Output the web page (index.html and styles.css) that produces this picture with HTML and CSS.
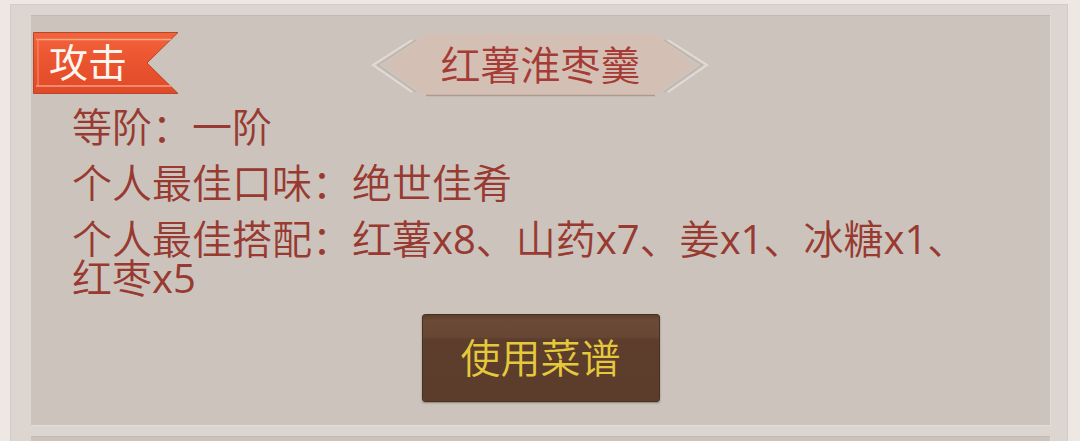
FILE: index.html
```html
<!DOCTYPE html>
<html lang="zh">
<head>
<meta charset="utf-8">
<link rel="stylesheet" href="styles.css">
</head>
<body>
<div class="frame">
  <div class="item">
    <div class="ribbon">
      <svg class="ribbon-bg" width="146" height="62" viewBox="0 0 146 62">
        <defs>
          <linearGradient id="rg" x1="0" y1="0" x2="0" y2="1">
            <stop offset="0" stop-color="#f2643c"/>
            <stop offset="0.5" stop-color="#ea532f"/>
            <stop offset="1" stop-color="#e04a28"/>
          </linearGradient>
        </defs>
        <polygon points="0.5,0.5 145,0.5 114,31 145,61.5 0.5,61.5" fill="url(#rg)" stroke="#b8462a" stroke-width="1"/>
        <line x1="3" y1="7.5" x2="138" y2="7.5" stroke="#f9a98a" stroke-width="1.5"/>
        <line x1="3" y1="54" x2="138" y2="54" stroke="#f7a080" stroke-width="1.5"/>
        <line x1="5" y1="7" x2="5" y2="54" stroke="#f58a68" stroke-width="1.2"/>
      </svg>
      <span class="ribbon-text">攻击</span>
    </div>
    <div class="banner-row">
      <div class="banner">
        <svg class="banner-bg" width="340" height="66" viewBox="0 0 340 66">
          <polyline points="42,8 3,33 42,60" fill="none" stroke="#e2dad4" stroke-width="2"/>
          <polyline points="46,8 8,33 46,60" fill="none" stroke="#b9aea6" stroke-width="1"/>
          <polyline points="298,8 337,33 298,60" fill="none" stroke="#e2dad4" stroke-width="2"/>
          <polyline points="294,8 332,33 294,60" fill="none" stroke="#b9aea6" stroke-width="1"/>
          <polygon points="15,33 56,2 285,2 324,33 285,64 56,64" fill="#d4bfb5"/>
          <line x1="56" y1="63.5" x2="285" y2="63.5" stroke="#ab9a91" stroke-width="1.5"/>
        </svg>
        <span class="banner-text">红薯淮枣羹</span>
      </div>
    </div>
    <div class="info">
      <p class="line">等阶：一阶</p>
      <p class="line">个人最佳口味：绝世佳肴</p>
      <p class="line">个人最佳搭配：红薯<span class="lat">x8</span>、山药<span class="lat">x7</span>、姜<span class="lat">x1</span>、冰糖<span class="lat">x1</span>、红枣<span class="lat">x5</span></p>
    </div>
    <div class="actions">
      <button class="use-btn">使用菜谱</button>
    </div>
  </div>
  <div class="item item-next"></div>
</div>
</body>
</html>
```

FILE: styles.css
```css
html, body {
  margin: 0;
  padding: 0;
}
body {
  width: 1080px;
  height: 441px;
  overflow: hidden;
  background: #ede8e4;
  font-family: "Open Sans", "Noto Sans CJK SC", "Noto Sans", sans-serif;
}
.frame {
  margin: 4px 12px 0 10px;
  padding: 10px 17px 0 20px;
  background: #ddd6d0;
  border: 1px solid #d3ccc6;
  border-bottom: none;
  height: 437px;
  box-sizing: border-box;
  overflow: hidden;
}
.item {
  position: relative;
  height: 410px;
  background: #ccc4bc;
  border-top: 1px solid #c2bab2;
  box-sizing: border-box;
  margin-bottom: 11px;
  box-shadow: 1px 1px 0 #e4ddd7;
}
.item-next {
  height: 60px;
}
.ribbon {
  position: absolute;
  left: 2px;
  top: 16px;
  width: 146px;
  height: 62px;
}
.ribbon-bg {
  position: absolute;
  left: 0;
  top: 0;
}
.ribbon-text {
  position: relative;
  display: block;
  padding-left: 16px;
  font-size: 39px;
  font-weight: 400;
  line-height: 60px;
  color: #fff6ef;
}
.banner-row {
  display: flex;
  justify-content: center;
  padding-top: 16px;
  padding-right: 2px;
}
.banner {
  position: relative;
  width: 340px;
  height: 66px;
  display: flex;
  align-items: center;
  justify-content: center;
}
.banner-bg {
  position: absolute;
  left: 0;
  top: 0;
}
.banner-text {
  position: relative;
  font-size: 40px;
  font-weight: 350;
  line-height: 66px;
  color: #a53b34;
  padding-left: 2px;
}
.info {
  padding: 9px 50px 0 41px;
}
.line {
  margin: 0 0 17px;
  font-size: 40px;
  font-weight: 350;
  line-height: 39px;
  color: #983a31;
}
.lat {
  font-weight: 400;
}
.actions {
  display: flex;
  justify-content: center;
  padding-top: 0;
}
.use-btn {
  width: 238px;
  height: 88px;
  border: 1px solid #4a3022;
  border-radius: 3px;
  background: linear-gradient(#5c3c2b 0, #6b4a37 6px, #674634 22px, #5d3d2c 24px, #5c3c2b 100%);
  box-shadow: 0 1px 2px rgba(60, 40, 30, 0.45);
  color: #e4c93c;
  font-family: "Open Sans", "Noto Sans CJK SC", "Noto Sans", sans-serif;
  font-size: 40px;
  font-weight: 350;
  line-height: 1;
  padding: 0;
}
```
